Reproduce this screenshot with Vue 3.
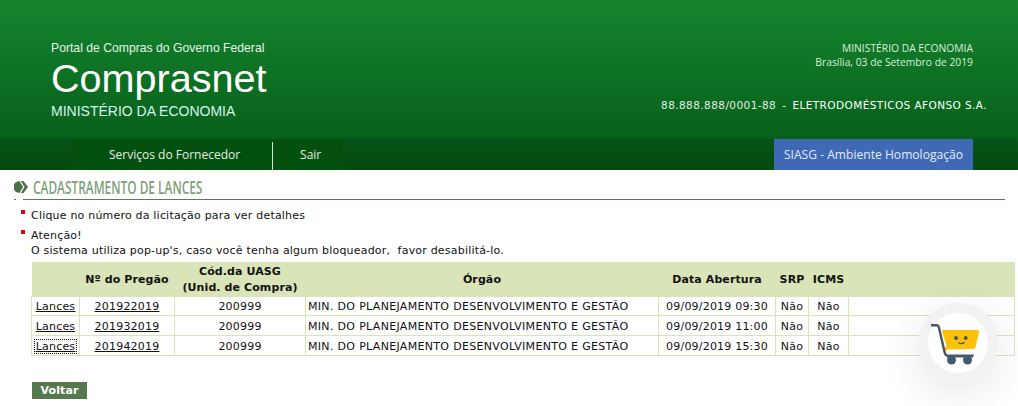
<script setup>
const rows = [
  { pregao: '201922019', data: '09/09/2019 09:30', focus: false },
  { pregao: '201932019', data: '09/09/2019 11:00', focus: false },
  { pregao: '201942019', data: '09/09/2019 15:30', focus: true }
]
</script>

<template>
  <div class="page">
    <header class="top">
      <div class="brand">
        <div class="portal">Portal de Compras do Governo Federal</div>
        <div class="name">Comprasnet</div>
        <div class="ministry">MINISTÉRIO DA ECONOMIA</div>
      </div>
      <div class="info">
        <div class="place">MINISTÉRIO DA ECONOMIA<br />Brasília, 03 de Setembro de 2019</div>
        <div class="company"><span class="cnpj">88.888.888/0001-88</span><span class="dash">-</span><span>ELETRODOMÉSTICOS AFONSO S.A.</span></div>
      </div>
    </header>
    <nav class="nav">
      <div class="menu">
        <a class="item first">Serviços do Fornecedor</a>
        <a class="item second">Sair</a>
      </div>
      <div class="env">SIASG - Ambiente Homologação</div>
    </nav>
    <main class="content">
      <h1 class="title">
        <svg class="bullet" width="14" height="14" viewBox="0 0 14 14">
          <path d="M5.500 1 A6 6 0 0 0 5.500 13 L9 7 Z" fill="#4f7046" />
          <path d="M6.800 1 H9.500 L14 7 L9.500 13 H6.800 L10.600 7 Z" fill="#4f7046" />
        </svg>
        <span class="title-text">CADASTRAMENTO DE LANCES</span>
      </h1>
      <ul class="notes">
        <li>Clique no número da licitação para ver detalhes</li>
        <li>Atenção!<br />O sistema utiliza pop-up's, caso você tenha algum bloqueador,&nbsp; favor desabilitá-lo.</li>
      </ul>
      <table class="grid">
        <colgroup>
          <col style="width:48px" /><col style="width:95px" /><col style="width:131px" /><col style="width:353px" />
          <col style="width:117px" /><col style="width:33px" /><col style="width:40px" /><col />
        </colgroup>
        <thead>
          <tr>
            <th></th>
            <th>Nº do Pregão</th>
            <th>Cód.da UASG<br />(Unid. de Compra)</th>
            <th>Órgão</th>
            <th>Data Abertura</th>
            <th>SRP</th>
            <th>ICMS</th>
            <th></th>
          </tr>
        </thead>
        <tbody>
          <tr v-for="r in rows" :key="r.pregao">
            <td class="c"><a class="link" :class="{ focus: r.focus }">Lances</a></td>
            <td class="c"><a class="link">{{ r.pregao }}</a></td>
            <td class="c">200999</td>
            <td class="l">MIN. DO PLANEJAMENTO DESENVOLVIMENTO E GESTÃO</td>
            <td class="c">{{ r.data }}</td>
            <td class="c">Não</td>
            <td class="c">Não</td>
            <td></td>
          </tr>
        </tbody>
      </table>
      <button class="back">Voltar</button>
    </main>
    <div class="cart">
      <div class="cart-inner">
        <svg width="60" height="60" viewBox="0 0 60 60">
          <path d="M13.700 17 H49 Q51.500 17 51 19.500 L47.500 34 Q47 36 45 36 L20 36.500 L14 39.500 L18.500 33 Z" fill="#ffc107" />
          <path d="M3 12.300 H9 Q10.400 12.300 10.800 14 L16.800 40 Q17.200 42 19 42" fill="none" stroke="#46596b" stroke-width="2.400" />
          <path d="M17 41.500 H46 L45 44.500 H19 Z" fill="#46596b" />
          <circle cx="23.500" cy="47" r="4.500" fill="#46596b" />
          <circle cx="39.500" cy="47" r="4.500" fill="#46596b" />
          <circle cx="28" cy="25" r="2" fill="#46596b" />
          <circle cx="37.700" cy="25" r="2" fill="#46596b" />
          <path d="M30.500 29.500 Q33.500 32 36.500 29" fill="none" stroke="#46596b" stroke-width="1.200" />
        </svg>
      </div>
    </div>
  </div>
</template>

<style>
html, body { margin: 0; background: #fff; overflow: hidden; }
</style>

<style scoped>
.page { position: relative; width: 1018px; height: 406px; overflow: hidden; background: #fff; font-family: "DejaVu Sans", sans-serif; }
.top {
  height: 139px; box-sizing: border-box;
  background: linear-gradient(#158530, #07601a);
  display: flex; justify-content: space-between;
  padding: 41px 31px 0 51px;
}
.brand { font-family: "Liberation Sans", Arial, sans-serif; color: #fff; }
.portal { font-size: 12.200px; line-height: 14px; color: #e3f4e6; }
.name { font-size: 39.600px; line-height: 46px; }
.ministry { font-size: 14px; line-height: 18px; margin-top: 1px; color: #d5f5f0; }
.info { display: flex; flex-direction: column; align-items: flex-end; }
.place { font-family: "Open Sans", sans-serif; font-size: 10.300px; line-height: 14px; text-align: right; color: #d8efd8; padding-right: 14px; }
.company { margin-top: 29px; font-size: 10.500px; line-height: 14px; letter-spacing: 0.42px; color: #fff; display: flex; }
.cnpj { color: #e4efe4; }
.dash { margin: 0 6px 0 6px; }
.nav { height: 31px; display: flex; justify-content: space-between; padding-right: 45px; background: linear-gradient(#07541a, #044a0c); }
.menu { display: flex; margin-left: 72px; background: #04500f; height: 31px; }
.item { font-family: "Open Sans", sans-serif; font-size: 12px; color: #e4efe4; line-height: 31px; }
.first { border-right: 1px solid #d9e2d9; height: 28px; margin-top: 3px; line-height: 25px; box-sizing: border-box; padding: 0 32px 0 37px; }
.second { padding: 0 21px 0 27px; }
.env { width: 199px; background: #3f69b5; color: #e3ebfa; font-family: "Open Sans", sans-serif; font-size: 12.100px; line-height: 31px; text-align: center; }
.content { padding: 0 13px 0 14px; }
.title { position: relative; margin: 0; display: flex; align-items: flex-start; gap: 5px; height: 30px; box-sizing: border-box; padding-top: 10px; font-weight: normal; }
.title-text { font-family: "Open Sans", sans-serif; font-weight: 600; font-size: 18px; line-height: 14px; color: #80a07a; transform: scaleX(0.66); transform-origin: left center; white-space: nowrap; }
.bullet { flex: none; margin-top: 0; }
.title::after { content: ""; position: absolute; left: 9px; right: 0; bottom: 0; height: 1px; background: #5a7b4f; }
.title::before { content: ""; position: absolute; left: 0; bottom: 0; width: 2px; height: 1px; background: #5a7b4f; }
.notes { list-style: none; margin: 8px 0 0; padding: 0 0 0 17px; font-size: 11px; line-height: 15px; color: #111; letter-spacing: 0.2px; }
.notes li { position: relative; margin-bottom: 5px; }
.notes li::before { content: ""; position: absolute; left: -10px; top: 2px; width: 4px; height: 4px; background: #e00000; }
.notes li:last-child { margin-bottom: 0; }
.grid { margin: 4px 0 0 17px; width: 984px; border-collapse: collapse; table-layout: fixed; font-size: 11px; color: #111; letter-spacing: 0.2px; }
.grid th { background: #d9e4b9; font-weight: bold; line-height: 16px; height: 32px; padding: 2px 0 0; text-align: center; letter-spacing: 0.1px; }
.grid td { border: 1px solid #d9e4b9; height: 17px; padding: 2px 0 0; line-height: 14px; }
.grid tbody tr:first-child td { height: 16px; }
.c { text-align: center; }
.l { text-align: left; padding-left: 2px !important; letter-spacing: 0.32px; }
.link { color: #111; text-decoration: underline; padding: 0 1px; }
.focus { outline: 1px dotted #111; outline-offset: 0; }
.back { display: block; margin: 26px 0 0 18px; width: 55px; height: 17px; border: 0; padding: 1px 0 0; background: #56784e; color: #fff; font: bold 11px/16px "DejaVu Sans", sans-serif; letter-spacing: 0.15px; }
.cart { position: absolute; left: 918px; top: 303px; width: 80px; height: 80px; border-radius: 50%; background: #f2f2f2; box-shadow: 0 10px 40px rgba(0,0,0,0.1); display: flex; align-items: center; justify-content: center; }
.cart-inner { width: 60px; height: 60px; border-radius: 50%; background: #fff; display: flex; align-items: center; justify-content: center; }
</style>
